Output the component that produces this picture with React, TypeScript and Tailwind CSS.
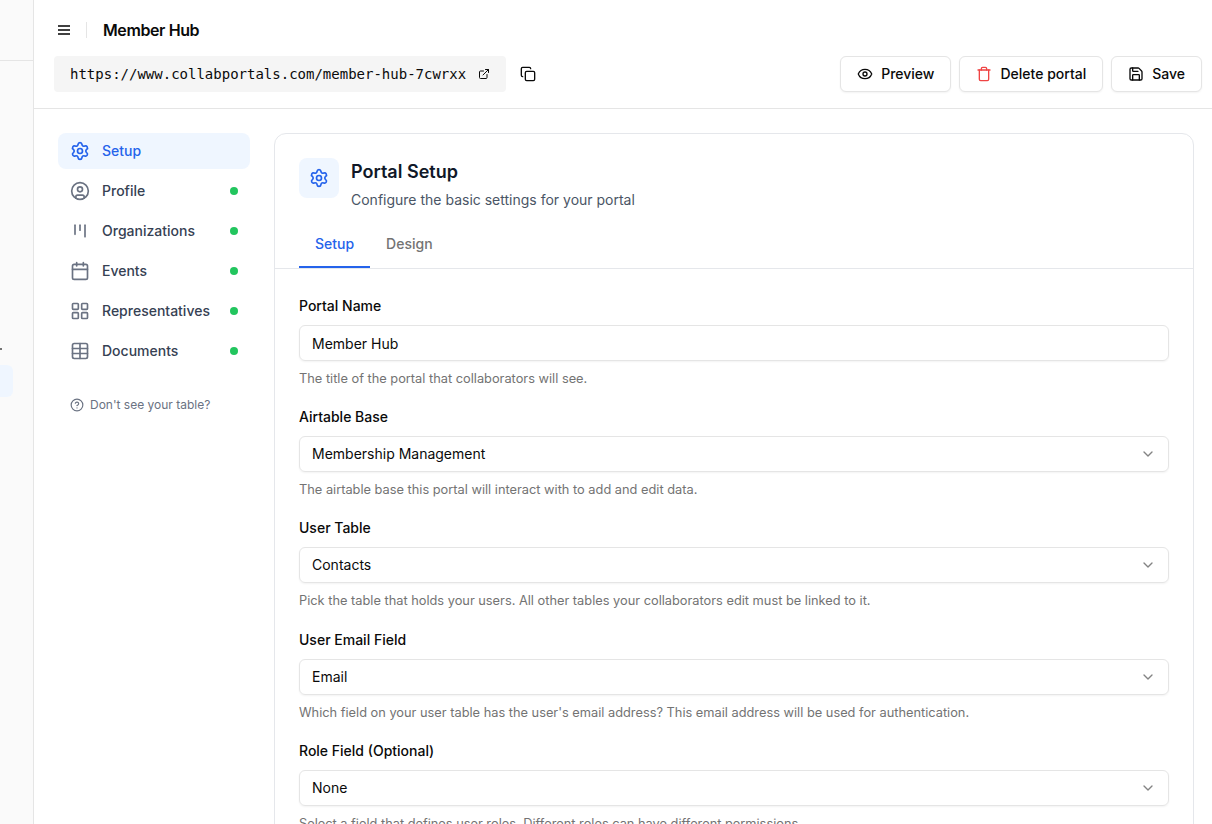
import React from "react";
import {
  Calendar,
  ChevronDown,
  CircleHelp,
  CircleUser,
  Copy,
  ExternalLink,
  Eye,
  LayoutGrid,
  Save,
  Settings,
  Table,
  Trash,
} from "lucide-react";

const KanbanIcon = ({ className }: any) => (
  <svg
    viewBox="0 0 24 24"
    fill="none"
    stroke="currentColor"
    strokeWidth={2}
    strokeLinecap="round"
    strokeLinejoin="round"
    className={className}
  >
    <path d="M6 5v11" />
    <path d="M12 5v6" />
    <path d="M18 5v14" />
  </svg>
);

const MenuIcon = () => (
  <svg width="16" height="16" viewBox="0 0 16 16" fill="#404040">
    <rect x="2" y="3" width="12" height="2" />
    <rect x="2" y="7" width="12" height="2" />
    <rect x="2" y="11" width="12" height="2" />
  </svg>
);

const navItems = [
  { label: "Setup", icon: Settings, active: true },
  { label: "Profile", icon: CircleUser },
  { label: "Organizations", icon: KanbanIcon },
  { label: "Events", icon: Calendar },
  { label: "Representatives", icon: LayoutGrid },
  { label: "Documents", icon: Table },
];

const fields = [
  {
    label: "Portal Name",
    value: "Member Hub",
    text: "The title of the portal that collaborators will see.",
    input: true,
  },
  {
    label: "Airtable Base",
    value: "Membership Management",
    text: "The airtable base this portal will interact with to add and edit data.",
  },
  {
    label: "User Table",
    value: "Contacts",
    text: "Pick the table that holds your users. All other tables your collaborators edit must be linked to it.",
  },
  {
    label: "User Email Field",
    value: "Email",
    text: "Which field on your user table has the user's email address? This email address will be used for authentication.",
  },
  {
    label: "Role Field (Optional)",
    value: "None",
    text: "Select a field that defines user roles. Different roles can have different permissions.",
  },
];

function HeaderButton({ icon, children }: any) {
  return (
    <button className="flex h-9 items-center gap-2 rounded-md border border-neutral-200 bg-white px-4 text-sm font-medium shadow-xs">
      {icon}
      {children}
    </button>
  );
}

function Header() {
  return (
    <header className="h-[109px] border-b border-neutral-200">
      <div className="flex h-14 items-center pt-1 pl-[22px]">
        <button aria-label="Menu">
          <MenuIcon />
        </button>
        <div className="ml-[14px] h-4 w-px bg-neutral-200" />
        <h1 className="ml-4 text-base font-semibold tracking-[-0.4px]">
          Member Hub
        </h1>
      </div>
      <div className="flex items-center pr-[10px] pl-5">
        <div className="flex h-9 w-[452px] items-center rounded bg-neutral-100 pl-4">
          <span className="font-['DejaVu_Sans_Mono',monospace] text-sm whitespace-nowrap">
            https://www.collabportals.com/member-hub-7cwrxx
          </span>
          <ExternalLink className="ml-3 size-3 shrink-0" />
        </div>
        <Copy className="ml-[14px] size-4" />
        <div className="ml-auto flex gap-2">
          <HeaderButton icon={<Eye className="size-4" />}>Preview</HeaderButton>
          <HeaderButton icon={<Trash className="size-4 text-[#ef4444]" />}>
            Delete portal
          </HeaderButton>
          <HeaderButton icon={<Save className="size-4" />}>Save</HeaderButton>
        </div>
      </div>
    </header>
  );
}

function Sidebar() {
  return (
    <nav className="w-48 shrink-0">
      <div className="flex flex-col gap-1">
        {navItems.map(({ label, icon: Icon, active }) => (
          <a
            key={label}
            className={`flex h-9 items-center gap-3 rounded-lg px-3 text-sm font-medium ${
              active ? "bg-blue-50 text-[#2563eb]" : "text-gray-700"
            }`}
          >
            <Icon
              className={`size-5 ${active ? "text-[#2563eb]" : "text-gray-500"}`}
            />
            {label}
            {!active && (
              <span className="ml-auto size-2 rounded-full bg-[#22c55e]" />
            )}
          </a>
        ))}
      </div>
      <div className="mt-7 flex items-center gap-1.5 px-3 text-xs text-gray-500">
        <CircleHelp className="size-3.5" />
        Don't see your table?
      </div>
    </nav>
  );
}

function Field({ label, value, text, input }: any) {
  return (
    <div>
      <label className="block text-sm leading-5 font-medium">{label}</label>
      <div
        className={`mt-[9px] flex h-9 items-center justify-between rounded-md border border-neutral-200 px-3 text-sm shadow-xs ${
          input ? "pt-px" : ""
        }`}
      >
        {value}
        {!input && <ChevronDown className="size-4 opacity-50" />}
      </div>
      <p className="mt-2 text-[12.8px] leading-[19.2px] text-neutral-500">
        {text}
      </p>
    </div>
  );
}

export default function App() {
  return (
    <div className="flex h-screen overflow-hidden bg-white font-[Inter,sans-serif] text-neutral-950">
      <aside className="w-[34px] shrink-0 overflow-hidden border-r border-neutral-200 bg-neutral-50">
        <div className="h-[61px] border-b border-neutral-200" />
        <div className="mt-[287px] h-0.5 w-0.5 bg-neutral-500" />
        <div className="mt-[15px] h-8 w-[13px] rounded-r-md bg-blue-50" />
      </aside>
      <div className="min-w-0 flex-1">
        <Header />
        <div className="flex items-start gap-6 pt-6 pr-[18px] pl-6">
          <Sidebar />
          <main className="min-w-0 flex-1 rounded-xl border border-gray-200 bg-white">
            <div className="flex gap-3 px-6 pt-6">
              <div className="flex size-10 items-center justify-center rounded-lg bg-blue-50">
                <Settings className="size-5 text-[#2563eb]" />
              </div>
              <div>
                <h2 className="text-lg leading-7 font-semibold text-gray-900">
                  Portal Setup
                </h2>
                <p className="mt-1 text-sm text-gray-600">
                  Configure the basic settings for your portal
                </p>
              </div>
            </div>
            <div className="mt-[10px] flex border-b border-gray-200 px-6 text-sm font-medium">
              <button className="h-12 border-b-2 border-[#2563eb] px-4 pt-0.5 text-[#2563eb]">
                Setup
              </button>
              <button className="h-12 border-b-2 border-transparent px-4 pt-0.5 text-neutral-500">
                Design
              </button>
            </div>
            <div className="flex flex-col gap-[19px] px-6 pt-[27px] pb-6">
              {fields.map((field) => (
                <Field key={field.label} {...field} />
              ))}
            </div>
          </main>
        </div>
      </div>
    </div>
  );
}
